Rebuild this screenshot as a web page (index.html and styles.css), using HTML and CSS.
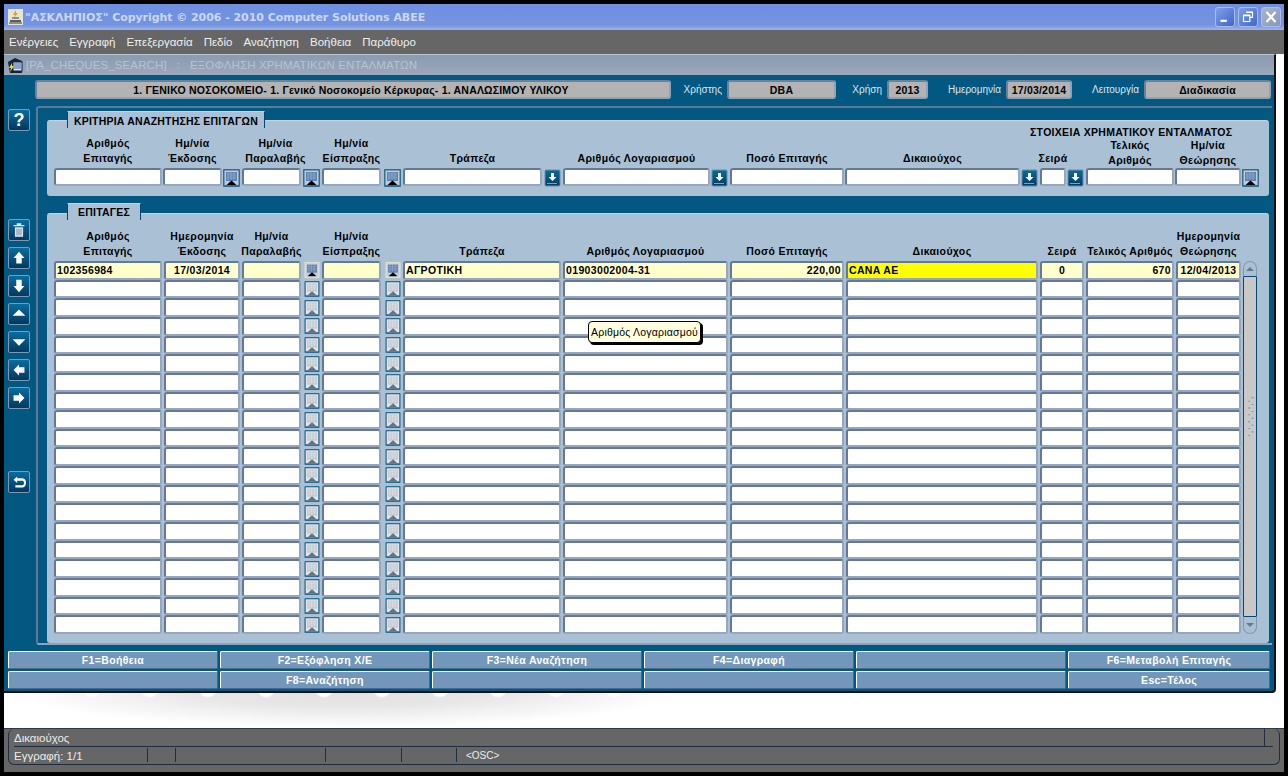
FILE: index.html
```html
<!DOCTYPE html>
<html lang="el">
<head>
    <meta charset="UTF-8">
    <title>ΑΣΚΛΗΠΙΟΣ</title>
    <link rel="stylesheet" href="styles.css">
</head>
<body>
    <svg class="defs" width="0" height="0">
        <symbol id="cal" viewBox="0 0 17 18">
            <rect width="17" height="18" rx="1" fill="currentColor"/>
            <rect x="1.500" y="1.500" width="14" height="14.500" class="cal-bg"/>
            <rect x="3" y="3" width="11" height="9" class="cal-img"/>
            <path d="M4 5h9M4 7h9M4 9h9M5 3v8M8 3v8M11 3v8" class="cal-lines"/>
            <path d="M3.500 16l5-4.500 5 4.500z" class="cal-tri"/>
        </symbol>
        <symbol id="lov" viewBox="0 0 17 18">
            <rect x="1" y="1" width="15" height="16" rx="1" fill="url(#btn)" stroke="#6f8cab"/>
            <path d="M7 4h3v4h2.500l-4 4-4-4h2.500z" fill="#fff"/>
            <path d="M3.500 14.500h10" stroke="#fff" stroke-dasharray="1 1"/>
        </symbol>
        <linearGradient id="btn" x1="0" y1="0" x2="0" y2="1">
            <stop offset="0" stop-color="#0a6c9e"/>
            <stop offset="1" stop-color="#013a5f"/>
        </linearGradient>
    </svg>

    <div class="screen">
        <div class="titlebar">
            <svg class="app-icon" viewBox="0 0 15 16">
                <rect width="15" height="16" fill="#e8e4d4"/>
                <path d="M8 1L5 6h2l-1 3 4-5H8z" fill="#e8a010"/>
                <path d="M2 11h11v2H2z" fill="#506070"/>
                <path d="M4 9h7M1 14h13" stroke="#303840"/>
            </svg>
            <span class="title-text">"ΑΣΚΛΗΠΙΟΣ" Copyright © 2006 - 2010 Computer Solutions ABEE</span>
            <span class="win-btn">
                <svg viewBox="0 0 20 20"><path d="M5 13h7v2.500H5z" fill="#fff"/></svg>
            </span>
            <span class="win-btn">
                <svg viewBox="0 0 20 20"><path d="M8 4.500h7v6h-3M5 8h7v7H5zM5 8.500h7M8 5h7" fill="none" stroke="#fff" stroke-width="1.300"/></svg>
            </span>
            <span class="win-btn win-close">
                <svg viewBox="0 0 20 20"><path d="M5 4.500l10 11M15 4.500l-10 11" stroke="#fff" stroke-width="2.400"/></svg>
            </span>
        </div>

        <div class="menubar">
            <span>Ενέργειες</span>
            <span>Εγγραφή</span>
            <span>Επεξεργασία</span>
            <span>Πεδίο</span>
            <span>Αναζήτηση</span>
            <span>Βοήθεια</span>
            <span>Παράθυρο</span>
        </div>

        <div class="desk">
            <div class="watermark"></div>
            <div class="form">
                <div class="caption">
                    <svg class="form-icon" viewBox="0 0 16 17">
                        <path d="M1 5l7-4 7 3v12H3z" fill="#18243c"/>
                        <rect x="6" y="5" width="9" height="9" fill="#d8e4f4" stroke="#102040"/>
                        <path d="M7 7h7M7 9h7M7 11h7" stroke="#4060a0"/>
                        <path d="M5 6L2 11h2l-1 4 4-6H5z" fill="#f0e020"/>
                    </svg>
                    <span>[PA_CHEQUES_SEARCH]&nbsp;&nbsp; :&nbsp;&nbsp; ΕΞΟΦΛΗΣΗ ΧΡΗΜΑΤΙΚΩΝ ΕΝΤΑΛΜΑΤΩΝ</span>
                </div>

                <div class="info">
                    <div class="info-field info-company">1. ΓΕΝΙΚΟ ΝΟΣΟΚΟΜΕΙΟ- 1. Γενικό Νοσοκομείο Κέρκυρας- 1. ΑΝΑΛΩΣΙΜΟΥ ΥΛΙΚΟΥ</div>
                    <div class="info-label">Χρήστης</div>
                    <div class="info-field">DBA</div>
                    <div class="info-label">Χρήση</div>
                    <div class="info-field">2013</div>
                    <div class="info-label">Ημερομηνία</div>
                    <div class="info-field">17/03/2014</div>
                    <div class="info-label">Λειτουργία</div>
                    <div class="info-field">Διαδικασία</div>
                </div>

                <div class="content">
                    <div class="toolbar">
                        <div class="tool tool-help">?</div>
                        <div class="tool-group">
                            <div class="tool">
                                <svg viewBox="0 0 22 22"><path d="M5 5.500h12v1.500H5zM8.500 5.500V3.500h5v2" fill="#dfe5ec"/><path d="M6.500 8h9v10.500h-9z" fill="#dfe5ec"/><path d="M8.800 9.500v7.500M11 9.500v7.500M13.200 9.500v7.500" stroke="#6f8298" stroke-width="1"/></svg>
                            </div>
                            <div class="tool">
                                <svg viewBox="0 0 22 22"><path d="M11 4l6 7h-3v6H8v-6H5z" fill="#fff"/></svg>
                            </div>
                            <div class="tool">
                                <svg viewBox="0 0 22 22"><path d="M8 4h6v7h3l-6 7-6-7h3z" fill="#fff"/></svg>
                            </div>
                            <div class="tool">
                                <svg viewBox="0 0 22 22"><path d="M11 6l7 7H4z" fill="#fff"/></svg>
                            </div>
                            <div class="tool">
                                <svg viewBox="0 0 22 22"><path d="M4 8h14l-7 7z" fill="#fff"/></svg>
                            </div>
                            <div class="tool">
                                <svg viewBox="0 0 22 22"><path d="M5 11l6-6v3h6v6h-6v3z" fill="#fff"/></svg>
                            </div>
                            <div class="tool">
                                <svg viewBox="0 0 22 22"><path d="M17 11l-6-6v3H5v6h6v3z" fill="#fff"/></svg>
                            </div>
                        </div>
                        <div class="tool tool-back">
                            <svg viewBox="0 0 22 22"><path d="M9 5L5 8.500 9 12v-2.500h6c2 0 2 5 0 5H7V17h8c5 0 5-10 0-10H9z" fill="#fff"/></svg>
                        </div>
                    </div>

                    <div class="frame">
                        <div class="panel panel-search">
                            <div class="tab tab-search">ΚΡΙΤΗΡΙΑ ΑΝΑΖΗΤΗΣΗΣ ΕΠΙΤΑΓΩΝ</div>
                            <div class="search-grid">
                                <div class="group-title">ΣΤΟΙΧΕΙΑ ΧΡΗΜΑΤΙΚΟΥ ΕΝΤΑΛΜΑΤΟΣ</div>
                                <div class="lbl">Αριθμός<br>Επιταγής</div>
                                <div class="lbl">Ημ/νία<br>Έκδοσης</div>
                                <div class="lbl"></div>
                                <div class="lbl lbl-shift">Ημ/νία<br>Παραλαβής</div>
                                <div class="lbl"></div>
                                <div class="lbl">Ημ/νία<br>Είσπραξης</div>
                                <div class="lbl"></div>
                                <div class="lbl">Τράπεζα</div>
                                <div class="lbl"></div>
                                <div class="lbl">Αριθμός Λογαριασμού</div>
                                <div class="lbl"></div>
                                <div class="lbl">Ποσό Επιταγής</div>
                                <div class="lbl">Δικαιούχος</div>
                                <div class="lbl"></div>
                                <div class="lbl">Σειρά</div>
                                <div class="lbl"></div>
                                <div class="lbl lbl-low">Τελικός<br>Αριθμός</div>
                                <div class="lbl lbl-low">Ημ/νία<br>Θεώρησης</div>
                                <div class="lbl"></div>

                                <div class="field"></div>
                                <div class="field"></div>
                                <svg class="ibtn cal"><use href="#cal"/></svg>
                                <div class="field"></div>
                                <svg class="ibtn cal"><use href="#cal"/></svg>
                                <div class="field"></div>
                                <svg class="ibtn cal"><use href="#cal"/></svg>
                                <div class="field"></div>
                                <svg class="ibtn"><use href="#lov"/></svg>
                                <div class="field"></div>
                                <svg class="ibtn"><use href="#lov"/></svg>
                                <div class="field"></div>
                                <div class="field"></div>
                                <svg class="ibtn"><use href="#lov"/></svg>
                                <div class="field"></div>
                                <svg class="ibtn"><use href="#lov"/></svg>
                                <div class="field"></div>
                                <div class="field"></div>
                                <svg class="ibtn cal"><use href="#cal"/></svg>
                            </div>
                        </div>

                        <div class="panel panel-results">
                            <div class="tab tab-results">ΕΠΙΤΑΓΕΣ</div>
                            <div class="results-head">
                                <div class="lbl">Αριθμός<br>Επιταγής</div>
                                <div class="lbl">Ημερομηνία<br>Έκδοσης</div>
                                <div class="lbl">Ημ/νία<br>Παραλαβής</div>
                                <div class="lbl"></div>
                                <div class="lbl">Ημ/νία<br>Είσπραξης</div>
                                <div class="lbl"></div>
                                <div class="lbl">Τράπεζα</div>
                                <div class="lbl">Αριθμός Λογαριασμού</div>
                                <div class="lbl">Ποσό Επιταγής</div>
                                <div class="lbl">Δικαιούχος</div>
                                <div class="lbl">Σειρά</div>
                                <div class="lbl">Τελικός Αριθμός</div>
                                <div class="lbl">Ημερομηνία<br>Θεώρησης</div>
                            </div>
                            <div class="results-body">
                                <div class="results-grid" id="rows">
                                    <div class="field on">102356984</div>
                                    <div class="field on center">17/03/2014</div>
                                    <div class="field on"></div>
                                    <svg class="ibtn cal cal-on"><use href="#cal"/></svg>
                                    <div class="field on"></div>
                                    <svg class="ibtn cal cal-on"><use href="#cal"/></svg>
                                    <div class="field on">ΑΓΡΟΤΙΚΗ</div>
                                    <div class="field on">01903002004-31</div>
                                    <div class="field on right">220,00</div>
                                    <div class="field current">CANA AE</div>
                                    <div class="field on center">0</div>
                                    <div class="field on right">670</div>
                                    <div class="field on center">12/04/2013</div>
                                </div>
                                <div class="scrollbar">
                                    <div class="sb-btn sb-up"></div>
                                    <div class="sb-track">
                                        <svg class="sb-grip" viewBox="0 0 14 48">
                                            <path d="M5 5h2v1H5zM9 1h2v1H9zM5 13h2v1H5zM9 9h2v1H9zM5 21h2v1H5zM9 17h2v1H9zM5 29h2v1H5zM9 25h2v1H9zM5 37h2v1H5zM9 33h2v1H9zM5 45h2v1H5zM9 41h2v1H9z" fill="#6a7f9e"/>
                                        </svg>
                                    </div>
                                    <div class="sb-btn sb-down"></div>
                                </div>
                            </div>
                            <div class="tooltip">Αριθμός Λογαριασμού</div>
                        </div>
                    </div>
                </div>

                <div class="keys">
                    <div class="key">F1=Βοήθεια</div>
                    <div class="key">F2=Εξόφληση Χ/Ε</div>
                    <div class="key">F3=Νέα Αναζήτηση</div>
                    <div class="key">F4=Διαγραφή</div>
                    <div class="key"></div>
                    <div class="key">F6=Μεταβολή Επιταγής</div>
                    <div class="key"></div>
                    <div class="key">F8=Αναζήτηση</div>
                    <div class="key"></div>
                    <div class="key"></div>
                    <div class="key"></div>
                    <div class="key">Esc=Τέλος</div>
                </div>
            </div>
        </div>

        <div class="statusbar">
            <div class="status-box">
                <div class="status-hint"><span>Δικαιούχος</span></div>
                <div class="status-row">
                    <span class="st-a">Εγγραφή: 1/1</span>
                    <span class="st-b"></span>
                    <span class="st-c"></span>
                    <span class="st-d"></span>
                    <span class="st-e"></span>
                    <span class="st-f">&lt;OSC&gt;</span>
                </div>
            </div>
        </div>
    </div>
    <script src="script.js"></script>
</body>
</html>
```

FILE: styles.css
```css
* {
    box-sizing: border-box;
}
body {
    margin: 0;
    background-color: #000;
    font-family: "Liberation Sans", Arial, sans-serif;
    font-size: 11px;
}
.defs {
    position: absolute;
}
.screen {
    width: 1288px;
    height: 776px;
    padding: 4px;
    display: flex;
    flex-direction: column;
    overflow: hidden;
}

/* window chrome */
.titlebar {
    height: 26px;
    display: flex;
    align-items: center;
    padding-left: 4px;
    padding-right: 3px;
    gap: 3px;
    background: linear-gradient(#6e8fe0, #7494e0 80%, #9fb4e8);
}
.app-icon {
    width: 15px;
    height: 16px;
    margin-right: -1px;
}
.title-text {
    flex: 1;
    color: #cbd6f2;
    font-family: "DejaVu Sans", sans-serif;
    font-weight: bold;
    font-size: 11px;
    letter-spacing: -.05px;
}
.win-btn {
    width: 20px;
    height: 20px;
    border-radius: 3px;
    border: 1px solid #a9bdec;
    background: linear-gradient(135deg, #7f9fe6, #3f67c8);
}
.win-btn svg {
    display: block;
    width: 18px;
    height: 18px;
}
.win-close {
    background: linear-gradient(135deg, #a8b6cf, #8797b8);
}
.menubar {
    height: 24px;
    display: flex;
    align-items: center;
    gap: 11px;
    padding-left: 5px;
    background-color: #666;
    color: #f0f0f0;
    font-size: 11.500px;
}
.desk {
    position: relative;
    flex: 1;
    background-color: #fff;
}
.watermark {
    position: absolute;
    left: 12px;
    top: 634px;
    width: 660px;
    height: 40px;
    background:
        radial-gradient(circle at 26px 0, #fff 0 8px, transparent 10px) 50px 0 / 58px 10px repeat-x,
        radial-gradient(ellipse 52% 100% at 50% 0, #e0e0e0 0, #e6e6e6 45%, #f4f4f4 75%, #fff 100%);
}
.form {
    position: relative;
    width: 1272px;
    height: 639px;
    padding-left: 2px;
    background-color: #025880;
    border-top: 1px solid #b8c4d2;
    border-right: 2px solid #111;
    border-bottom: 2px solid #111;
    border-bottom-right-radius: 4px;
    display: flex;
    flex-direction: column;
}
.caption {
    height: 20px;
    margin-left: -2px;
    display: flex;
    align-items: center;
    gap: 3px;
    padding-left: 3px;
    background: linear-gradient(#8a9bb0, #9aa9bc);
    color: #b8c2ce;
    font-size: 11.500px;
    letter-spacing: .12px;
}
.form-icon {
    width: 16px;
    height: 17px;
}

/* info strip */
.info {
    display: grid;
    grid-template-columns: 636px 56px 109px 51px 41px 78px 66px 72px 127px;
    margin-top: 5px;
    margin-left: 29px;
    height: 19px;
}
.info-field {
    display: flex;
    align-items: center;
    justify-content: center;
    background-color: #b3b3b3;
    border: 2px solid;
    border-color: #6d8199 #8fa3b8 #8fa3b8 #6d8199;
    border-radius: 3px;
    color: #000;
    font-weight: bold;
    font-size: 10.500px;
    letter-spacing: .2px;
    white-space: nowrap;
}
.info-company {
    padding-right: 4px;
}
.info-label {
    display: flex;
    align-items: center;
    justify-content: flex-end;
    padding-right: 5px;
    color: #dce6f0;
    font-size: 10px;
}

/* left toolbar and frame */
.content {
    display: flex;
    margin-top: 7px;
    flex: 1;
}
.toolbar {
    width: 30px;
    padding-left: 2px;
    padding-top: 3px;
}
.tool-group {
    margin-top: 88px;
    display: flex;
    flex-direction: column;
    gap: 6px;
}
.tool {
    width: 22px;
    height: 22px;
    border: 1px solid #7f99b5;
    border-radius: 2px;
    background: linear-gradient(#0a6c9e, #013a5f);
    color: #fff;
    font-size: 18px;
    font-weight: bold;
    line-height: 20px;
    text-align: center;
}
.tool svg {
    display: block;
    width: 20px;
    height: 20px;
}
.tool-back {
    margin-top: 62px;
}
.frame {
    width: 1236px;
    height: 539px;
    border: 2px solid #5f7a96;
    border-right: 0;
    border-bottom-color: #8aa4bd;
    border-top-left-radius: 3px;
    border-bottom-left-radius: 3px;
    padding-left: 9px;
    padding-right: 3px;
}
.panel {
    position: relative;
    background-color: #a9c0d5;
    border-top: 1px solid #c5d3e0;
    border-radius: 3px;
    padding-left: 7px;
}
.panel-search {
    height: 76px;
    margin-top: 12px;
}
.panel-results {
    height: 430px;
    margin-top: 17px;
}
.tab {
    position: absolute;
    left: 20px;
    background-color: #a9c0d5;
    border-top: 1px solid #c5d3e0;
    border-left: 1px solid #04486d;
    border-right: 1px solid #04486d;
    color: #000;
    font-weight: bold;
    font-size: 10.500px;
    letter-spacing: .2px;
    text-align: center;
}
.tab-search {
    top: -10px;
    width: 198px;
    height: 17px;
    line-height: 18px;
}
.tab-results {
    top: -11px;
    width: 74px;
    height: 17px;
    line-height: 17px;
}
.group-title {
    grid-column: 15 / 20;
    height: 12px;
    line-height: 12px;
    color: #000;
    font-weight: bold;
    font-size: 10.500px;
    letter-spacing: .3px;
    white-space: nowrap;
    margin-left: -10px;
}
.lbl {
    display: flex;
    align-items: flex-end;
    justify-content: center;
    text-align: center;
    line-height: 15px;
    color: #000;
    font-weight: bold;
    font-size: 10.500px;
    letter-spacing: .35px;
    white-space: nowrap;
}
.lbl-shift {
    padding-left: 8px;
}
.search-grid {
    display: grid;
    grid-template-columns: 108px 59px 18px 59px 19px 59px 20px 139px 19px 147px 18px 114px 175px 18px 26px 18px 88px 66px 18px;
    grid-template-rows: 12px 30px 19px;
    column-gap: 1px;
    padding-top: 5px;
}
.search-grid .group-title {
    grid-row: 1;
}
.search-grid .lbl {
    grid-row: 2;
    padding-bottom: 2px;
}
.search-grid .lbl-low {
    padding-bottom: 0;
}
.search-grid .field,
.search-grid .ibtn {
    grid-row: 3;
}
.search-grid .field {
    margin-bottom: 1px;
}
.search-grid .ibtn {
    justify-self: end;
    margin-right: 1px;
}
.results-head,
.results-grid {
    display: grid;
    grid-template-columns: 108px 76px 59px 17px 59px 18px 158px 165px 114px 192px 44px 88px 65px;
    column-gap: 2px;
}
.results-head {
    height: 30px;
    margin-top: 15px;
}
.results-body {
    display: flex;
    gap: 2px;
    margin-top: 2px;
    height: 373px;
}
.results-grid {
    grid-template-rows: repeat(20, 1fr);
    height: 373px;
}
.results-grid .ibtn {
    width: 16px;
    height: 16px;
    justify-self: end;
}

/* fields and small buttons */
.field {
    min-width: 0;
    background-color: #fff;
    border: 2px solid;
    border-color: #64799a #97a6ba #97a6ba #64799a;
    border-radius: 3px;
    padding: 0 1px;
    color: #000;
    font-weight: bold;
    font-size: 10.500px;
    letter-spacing: .35px;
    display: flex;
    align-items: center;
    white-space: nowrap;
}
.field.on {
    background-color: #ffffcc;
}
.field.current {
    background-color: #ffff00;
}
.field.center {
    justify-content: center;
}
.field.right {
    justify-content: flex-end;
}
.ibtn {
    width: 17px;
    height: 18px;
    justify-self: center;
    align-self: center;
}
.cal {
    color: #2f6d91;
    --cal-bg: #c3ccd6;
    --cal-img: #5a80b4;
    --cal-line: #9fb2cc;
    --cal-tri: #000;
}
.cal-on {
    color: #dfe0cc;
}
.cal-off {
    --cal-bg: #e2e6ea;
    --cal-img: #c4cad0;
    --cal-line: #dde1e5;
    --cal-tri: #68727c;
}
.cal-bg {
    fill: var(--cal-bg);
}
.cal-img {
    fill: var(--cal-img);
}
.cal-lines {
    stroke: var(--cal-line);
    stroke-width: .6;
}
.cal-tri {
    fill: var(--cal-tri);
}

/* scrollbar */
.scrollbar {
    width: 14px;
    display: flex;
    flex-direction: column;
}
.sb-btn {
    height: 16px;
    background-color: #a9c0d5;
    border: 1px solid #8497ad;
    display: flex;
    align-items: center;
    justify-content: center;
}
.sb-up {
    border-radius: 7px 7px 0 0;
    border-bottom-color: #04486d;
}
.sb-down {
    height: 18px;
    border-radius: 0 0 7px 7px;
    border-top-color: #04486d;
}
.sb-up::after,
.sb-down::after {
    content: "";
    border-left: 4px solid transparent;
    border-right: 4px solid transparent;
}
.sb-up::after {
    border-bottom: 4px solid #64799a;
}
.sb-down::after {
    border-top: 4px solid #64799a;
}
.sb-track {
    flex: 1;
    background-color: #c8c8c8;
    border-left: 1px solid #04486d;
    border-right: 1px solid #04486d;
}
.sb-grip {
    display: block;
    width: 12px;
    height: 48px;
    margin-top: 116px;
}
.tooltip {
    position: absolute;
    left: 541px;
    top: 107px;
    width: 113px;
    height: 22px;
    background-color: #ffffdf;
    border: 1px solid #000;
    border-radius: 4px;
    box-shadow: 2px 2px 0 #000;
    color: #000;
    font-size: 10.500px;
    letter-spacing: .2px;
    line-height: 20px;
    text-align: center;
}

/* function keys */
.keys {
    display: grid;
    grid-template-columns: 210px 210px 210px 210px 210px 202px;
    grid-template-rows: 18px 18px;
    gap: 2px;
    margin-left: 2px;
    margin-bottom: 2px;
}
.key {
    background-color: #7297ba;
    border: 1px solid;
    border-color: #fff #47698a #47698a #fff;
    border-radius: 2px;
    color: #fff;
    font-weight: bold;
    font-size: 10.500px;
    letter-spacing: .35px;
    line-height: 16px;
    text-align: center;
}

/* status bar */
.statusbar {
    height: 44px;
    background-color: #666;
    border-top: 1px solid #2c3a4c;
    padding: 0 0 7px 4px;
    color: #ececec;
    font-size: 11.500px;
}
.status-box {
    height: 36px;
    border: 1px solid #1f2d40;
    border-top: 0;
    border-radius: 6px;
    margin-right: 4px;
    padding-left: 5px;
}
.status-hint {
    height: 18px;
    margin-right: 6px;
    border-bottom: 1px solid #1f2d40;
    line-height: 19px;
    display: flex;
    justify-content: space-between;
}
.status-hint::after {
    content: "";
    width: 8px;
    border-left: 1px solid #1f2d40;
}
.status-row {
    display: flex;
    height: 17px;
    line-height: 18px;
}
.status-row span {
    border-right: 1px solid #1f2d40;
    height: 14px;
    margin-top: 1px;
    line-height: 16px;
}
.st-a { width: 134px; }
.st-b { width: 28px; }
.st-c { width: 150px; }
.st-d { width: 76px; }
.st-e { width: 55px; }
.status-row .st-f {
    border-right: 0;
    padding-left: 9px;
    font-size: 10px;
}
```

FILE: script.js
```js
// 19 empty rows below the data row
var rows = document.getElementById("rows");
var calBtn = '<svg class="ibtn cal cal-off"><use href="#cal"/></svg>';
var cell = '<div class="field"></div>';
var row = cell + cell + cell + calBtn + cell + calBtn;
for (var c = 0; c < 7; c++) {
    row += cell;
}
for (var i = 0; i < 19; i++) {
    rows.insertAdjacentHTML("beforeend", row);
}
```
